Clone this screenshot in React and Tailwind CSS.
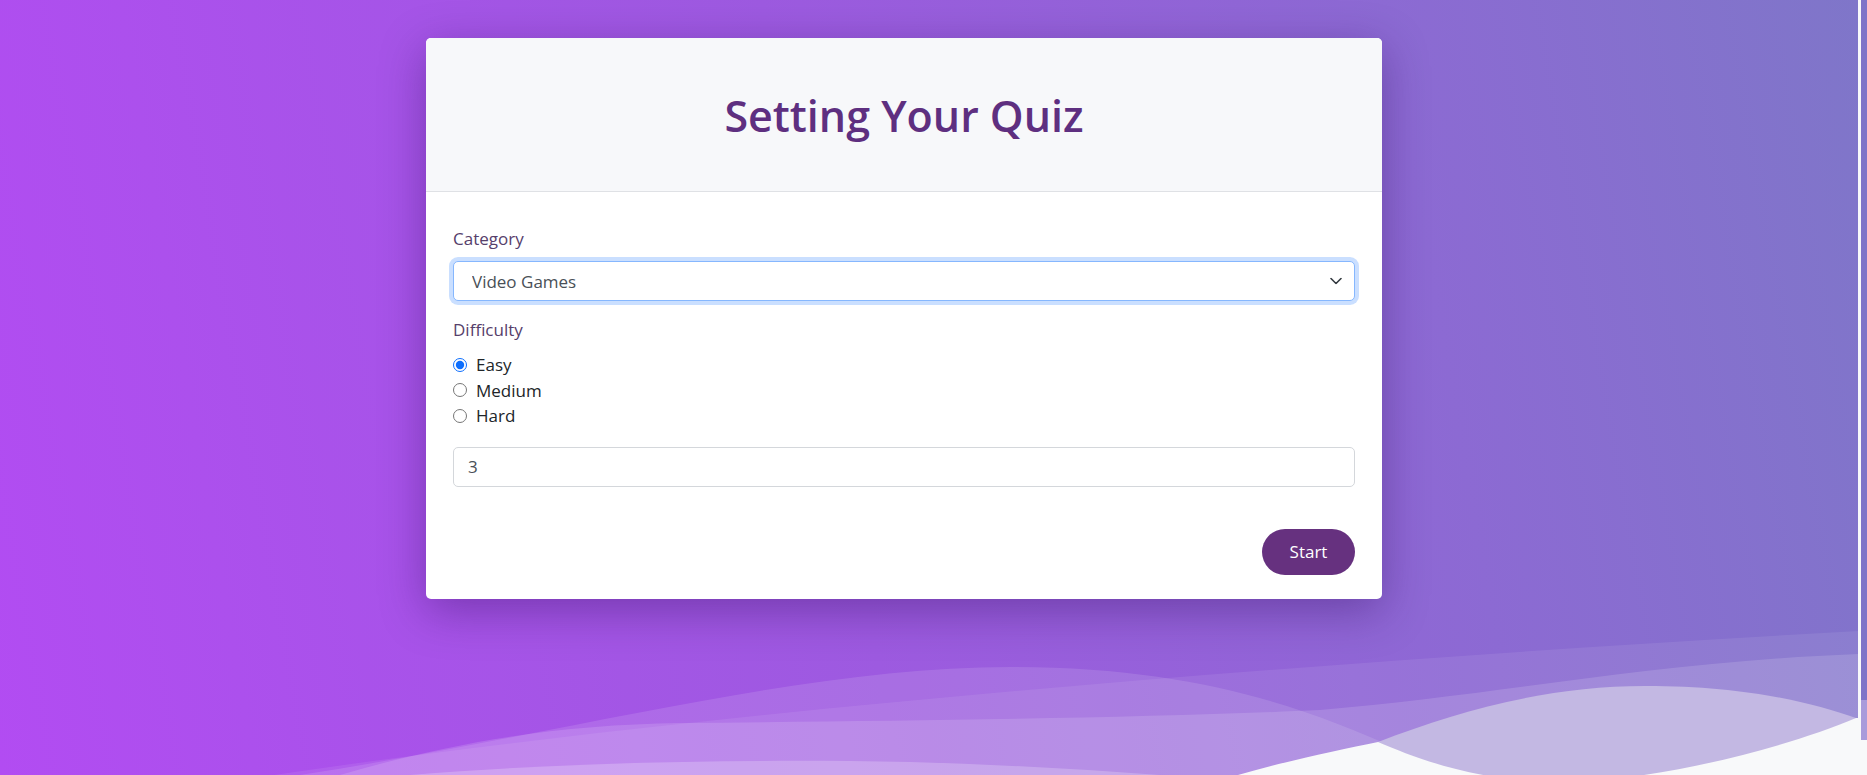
import React, { useState } from 'react';

const font = { fontFamily: '"Open Sans", "Noto Sans", sans-serif' };

const Waves = () => (
  <svg
    className="absolute left-0 bottom-0 w-full h-[175px]"
    viewBox="0 0 1858 175"
    preserveAspectRatio="none"
  >
    {/* long faint ribbon */}
    <path d="M274,175 C700,112 1300,62 1858,31 L1858,175 Z" fill="#ffffff" fillOpacity="0.08" />
    {/* hump */}
    <path d="M300,175 C560,135 800,67 1010,67 C1190,67 1300,105 1400,150 L1460,175 Z" fill="#ffffff" fillOpacity="0.12" />
    {/* flat band */}
    <path d="M340,175 C460,140 560,125 680,123 C900,121 1150,118 1320,110 C1500,95 1650,62 1858,54 L1858,175 Z" fill="#ffffff" fillOpacity="0.14" />
    {/* light bottom band */}
    <path d="M410,175 C560,163 700,160 850,161 C960,162 1060,168 1160,175 Z" fill="#ffffff" fillOpacity="0.22" />
    {/* page below */}
    <path d="M1238,175 C1290,160 1340,150 1378,142 L1856,118 L1858,118 L1858,175 Z" fill="#f8f9fa" />
    {/* lavender lens */}
    <path d="M1378,142 C1460,110 1550,86 1645,86 C1745,86 1810,102 1856,118 C1780,150 1650,182 1560,182 C1480,182 1420,160 1378,142 Z" fill="#c3b8e3" />
  </svg>
);

const Chevron = () => (
  <svg className="absolute right-[13px] top-1/2 -translate-y-1/2 pointer-events-none" width="12" height="7" viewBox="0 0 12 7">
    <path d="M1 1 L6 6 L11 1" fill="none" stroke="#343a40" strokeWidth="1.6" strokeLinecap="round" strokeLinejoin="round" />
  </svg>
);

const App = () => {
  const [category, setCategory] = useState('15');
  const [difficulty, setDifficulty] = useState('easy');
  const [amount, setAmount] = useState('3');

  const levels = [
    { value: 'easy', label: 'Easy' },
    { value: 'medium', label: 'Medium' },
    { value: 'hard', label: 'Hard' },
  ];

  return (
    <div className="flex w-full h-[775px] overflow-hidden" style={font}>
      <div className="relative flex-1 bg-[linear-gradient(80deg,#b24cf2_0%,#9d5ae0_45%,#7f76c9_100%)]">
        <Waves />

        <div className="relative pt-[38px] pl-[426px]">
          <div className="w-[956px] bg-white rounded-[5px] overflow-hidden shadow-[0_12px_45px_rgba(45,10,90,0.38)]">
            {/* header */}
            <div className="h-[154px] bg-[#f7f8fa] border-b border-[#dfe1e5] flex items-center justify-center">
              <h1 className="text-[43px] font-semibold text-[#5e2f80] leading-none pt-[1px]">
                Setting Your Quiz
              </h1>
            </div>

            {/* form */}
            <div className="px-[27px] pt-[33px] pb-[24px] text-[17px] leading-[27px]">
              <label className="block text-[#56406b] mb-[9px]">Category</label>
              <div className="relative">
                <select
                  value={category}
                  onChange={(e) => setCategory(e.target.value)}
                  className="appearance-none w-full h-[40px] pl-[18px] pr-10 text-[17px] text-[#495057] bg-white border border-[#86b7fe] rounded-[5px] shadow-[0_0_0_4px_rgba(13,110,253,0.22)] outline-none"
                  style={font}
                >
                  <option value="9">General Knowledge</option>
                  <option value="15">Video Games</option>
                  <option value="17">Science &amp; Nature</option>
                </select>
                <Chevron />
              </div>

              <label className="block text-[#56406b] mt-[15px]">Difficulty</label>
              <div className="mt-[9px] flex flex-col">
                {levels.map((lvl) => (
                  <label key={lvl.value} className="flex items-center h-[25.5px] text-[#212529] cursor-pointer">
                    <input
                      type="radio"
                      name="difficulty"
                      value={lvl.value}
                      checked={difficulty === lvl.value}
                      onChange={() => setDifficulty(lvl.value)}
                      className="m-0 w-[14px] h-[14px] accent-[#0d6efd]"
                    />
                    <span className="ml-[9px]">{lvl.label}</span>
                  </label>
                ))}
              </div>

              <input
                type="number"
                value={amount}
                onChange={(e) => setAmount(e.target.value)}
                className="mt-[18px] block w-full h-[40px] pl-[14px] text-[17px] text-[#495057] border border-[#d4d7db] rounded-[5px] outline-none"
                style={font}
              />

              <div className="flex justify-end mt-[42px]">
                <button className="w-[93px] h-[46px] rounded-full bg-[#66317f] text-white text-[17px]">
                  Start
                </button>
              </div>
            </div>
          </div>
        </div>
      </div>

      <div className="w-[3px] bg-[#f8f9fa]" />
      <div className="w-[6px] flex flex-col">
        <div className="flex-1 bg-[#7e74c8]" />
        <div className="h-[40px] bg-[#a99bdb]" />
        <div className="h-[35px] bg-[#f8f9fa]" />
      </div>
    </div>
  );
};

export default App;
